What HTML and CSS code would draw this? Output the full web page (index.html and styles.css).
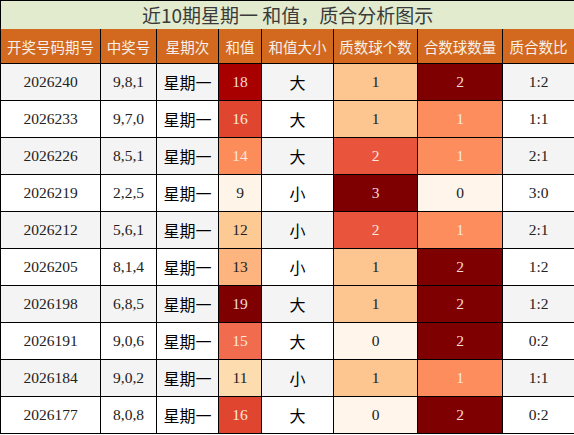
FILE: index.html
```html
<!DOCTYPE html>
<html lang="zh">
<head>
<meta charset="utf-8">
<link rel="stylesheet" href="styles.css">
</head>
<body>
<table class="grid">
<colgroup>
<col class="c1"><col class="c2"><col class="c3"><col class="c4"><col class="c5"><col class="c6"><col class="c7"><col class="c8">
</colgroup>
<thead>
<tr class="title-row"><th colspan="8" class="title">近10期星期一 和值，质合分析图示</th></tr>
<tr class="head-row">
<th>开奖号码期号</th><th>中奖号</th><th>星期次</th><th>和值</th><th>和值大小</th><th>质数球个数</th><th>合数球数量</th><th>质合数比</th>
</tr>
</thead>
<tbody>
<tr><td class="num">2026240</td><td class="num">9,8,1</td><td class="cjk">星期一</td><td class="num s18">18</td><td class="cjk">大</td><td class="num p1">1</td><td class="num h2">2</td><td class="num">1:2</td></tr>
<tr class="alt"><td class="num">2026233</td><td class="num">9,7,0</td><td class="cjk">星期一</td><td class="num s16">16</td><td class="cjk">大</td><td class="num p1">1</td><td class="num h1">1</td><td class="num">1:1</td></tr>
<tr><td class="num">2026226</td><td class="num">8,5,1</td><td class="cjk">星期一</td><td class="num s14">14</td><td class="cjk">大</td><td class="num p2">2</td><td class="num h1">1</td><td class="num">2:1</td></tr>
<tr class="alt"><td class="num">2026219</td><td class="num">2,2,5</td><td class="cjk">星期一</td><td class="num s9">9</td><td class="cjk">小</td><td class="num p3">3</td><td class="num h0">0</td><td class="num">3:0</td></tr>
<tr><td class="num">2026212</td><td class="num">5,6,1</td><td class="cjk">星期一</td><td class="num s12">12</td><td class="cjk">小</td><td class="num p2">2</td><td class="num h1">1</td><td class="num">2:1</td></tr>
<tr class="alt"><td class="num">2026205</td><td class="num">8,1,4</td><td class="cjk">星期一</td><td class="num s13">13</td><td class="cjk">小</td><td class="num p1">1</td><td class="num h2">2</td><td class="num">1:2</td></tr>
<tr><td class="num">2026198</td><td class="num">6,8,5</td><td class="cjk">星期一</td><td class="num s19">19</td><td class="cjk">大</td><td class="num p1">1</td><td class="num h2">2</td><td class="num">1:2</td></tr>
<tr class="alt"><td class="num">2026191</td><td class="num">9,0,6</td><td class="cjk">星期一</td><td class="num s15">15</td><td class="cjk">大</td><td class="num p0">0</td><td class="num h2">2</td><td class="num">0:2</td></tr>
<tr><td class="num">2026184</td><td class="num">9,0,2</td><td class="cjk">星期一</td><td class="num s11">11</td><td class="cjk">小</td><td class="num p1">1</td><td class="num h1">1</td><td class="num">1:1</td></tr>
<tr class="alt"><td class="num">2026177</td><td class="num">8,0,8</td><td class="cjk">星期一</td><td class="num s16">16</td><td class="cjk">大</td><td class="num p0">0</td><td class="num h2">2</td><td class="num">0:2</td></tr>
</tbody>
</table>
</body>
</html>
```
FILE: styles.css
```css
html, body {
  margin: 0;
  padding: 0;
  background: #ffffff;
}
.grid {
  width: 574px;
  border-collapse: collapse;
  table-layout: fixed;
  font-family: "Liberation Serif", "Noto Sans CJK SC", serif;
}
.c1 { width: 100px; }
.c2 { width: 56px; }
.c3 { width: 62px; }
.c4 { width: 43px; }
.c5 { width: 72px; }
.c6 { width: 84px; }
.c7 { width: 85px; }
.c8 { width: 72px; }

.grid th, .grid td {
  border: 1px solid #000;
  padding: 0;
  text-align: center;
  vertical-align: middle;
}
.title {
  height: 28px;
  background: #e3ebcf;
  color: #3a3a3a;
  font-family: "Noto Sans CJK SC", sans-serif;
  font-weight: normal;
  font-size: 19px;
  line-height: 28px;
  border-bottom: none !important;
}
.head-row th {
  height: 34px;
  background: #d2691e;
  color: #f6f0ea;
  font-family: "Noto Sans CJK SC", sans-serif;
  font-weight: normal;
  font-size: 14.5px;
  border-top: none;
}
.grid tbody tr td {
  height: 36px;
  background: #f4f4f4;
  color: #222;
}
.grid tbody tr.alt td { background: #ffffff; }
.num {
  font-family: "Liberation Serif", serif;
  font-size: 15.5px;
}
.grid tbody tr td.cjk {
  font-family: "Noto Sans CJK SC", sans-serif;
  font-size: 16px;
  color: #000;
}

.grid tbody tr td.s9 { background: #fef4e8; }
.grid tbody tr td.s11 { background: #fddcb0; }
.grid tbody tr td.s12 { background: #fdca94; }
.grid tbody tr td.s13 { background: #fdb47e; }
.grid tbody tr td.s14 { background: #fc8d5a; color: #fde8dc; }
.grid tbody tr td.s15 { background: #f16c4e; color: #fde8dc; }
.grid tbody tr td.s16 { background: #e0462f; color: #fde8dc; }
.grid tbody tr td.s18 { background: #a80000; color: #f6dada; }
.grid tbody tr td.s19 { background: #7f0000; color: #f6dada; }

.grid tbody tr td.p0 { background: #fff5eb; }
.grid tbody tr td.p1 { background: #fdc590; }
.grid tbody tr td.p2 { background: #e8553c; color: #fde8dc; }
.grid tbody tr td.p3 { background: #7f0000; color: #f6dada; }

.grid tbody tr td.h0 { background: #fff5eb; }
.grid tbody tr td.h1 { background: #fd8d5c; color: #fde8dc; }
.grid tbody tr td.h2 { background: #7f0000; color: #f6dada; }
```
